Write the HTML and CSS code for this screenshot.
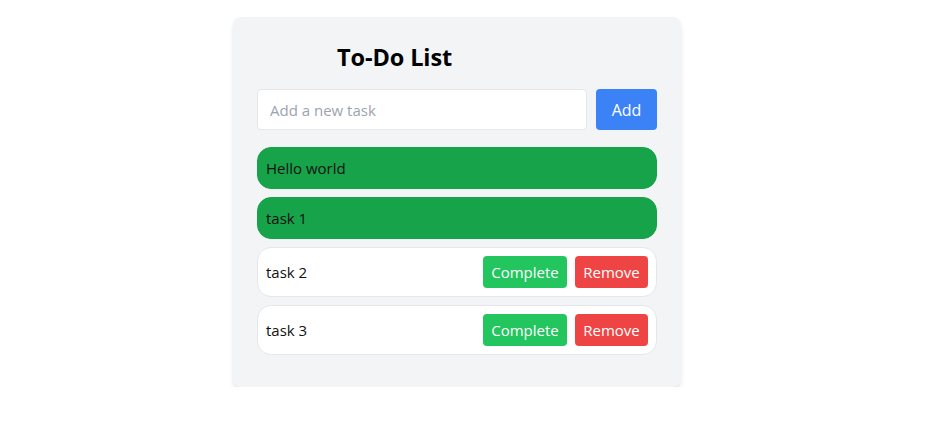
FILE: index.html
```html
<!DOCTYPE html>
<html>
<head>
<meta charset="utf-8">
<link rel="stylesheet" href="styles.css">
</head>
<body>
<div class="page">
  <div class="card">
    <h1 class="title">To-Do List</h1>
    <div class="add-row">
      <input class="task-input" type="text" placeholder="Add a new task">
      <button class="btn btn-add">Add</button>
    </div>
    <ul class="list">
      <li class="item done"><span class="label">Hello world</span></li>
      <li class="item done"><span class="label">task 1</span></li>
      <li class="item">
        <span class="label">task 2</span>
        <div class="actions">
          <button class="btn btn-complete">Complete</button>
          <button class="btn btn-remove">Remove</button>
        </div>
      </li>
      <li class="item">
        <span class="label">task 3</span>
        <div class="actions">
          <button class="btn btn-complete">Complete</button>
          <button class="btn btn-remove">Remove</button>
        </div>
      </li>
    </ul>
  </div>
</div>
</body>
</html>
```
FILE: styles.css
```css
* { box-sizing: border-box; }
html, body { margin: 0; background: #ffffff; }
body {
  font-family: "Open Sans", "Noto Sans", "Liberation Sans", sans-serif;
  color: #111111;
}
.page {
  padding: 17px 0 0 233px;
}
.card {
  width: 448px;
  background: #f3f4f6;
  border-radius: 8px;
  padding: 24px 24px 24px 24px;
  box-shadow: 0 4px 6px -1px rgba(0,0,0,0.1), 0 2px 4px -2px rgba(0,0,0,0.1);
}
.title {
  margin: 0 0 16px 0;
  padding-left: 80px;
  font-size: 23.5px;
  line-height: 32px;
  font-weight: 700;
  color: #000;
  letter-spacing: -0.1px;
}
.add-row {
  display: flex;
  gap: 9px;
  margin-bottom: 17px;
}
.task-input {
  flex: 1;
  height: 41px;
  border: 1px solid #e5e7eb;
  border-radius: 4px;
  padding: 0 12px;
  font-family: inherit;
  font-size: 15px;
  color: #111;
  background: #fff;
  outline: none;
}
.task-input::placeholder { color: #9ca3af; }
.btn {
  border: none;
  border-radius: 4px;
  color: #fff;
  font-family: inherit;
  font-size: 15px;
  cursor: pointer;
}
.btn-add {
  width: 61px;
  height: 41px;
  background: #3b82f6;
  font-size: 16px;
}
.list {
  list-style: none;
  margin: 0 0 8px 0;
  padding: 0;
  display: flex;
  flex-direction: column;
  gap: 8px;
}
.item {
  display: flex;
  align-items: center;
  justify-content: space-between;
  min-height: 42px;
  padding: 8px 8px 8px 8px;
  border: 1px solid #e5e7eb;
  border-radius: 14px;
  background: #ffffff;
  font-size: 15px;
}
.item.done {
  background: #16a34a;
  border-color: #16a34a;
}
.label { line-height: 22px; }
.actions {
  display: flex;
  gap: 8px;
}
.btn-complete {
  height: 32px;
  width: 84px;
  background: #22c55e;
  padding: 0;
}
.btn-remove {
  height: 32px;
  width: 73px;
  background: #ef4444;
  padding: 0;
}
```
